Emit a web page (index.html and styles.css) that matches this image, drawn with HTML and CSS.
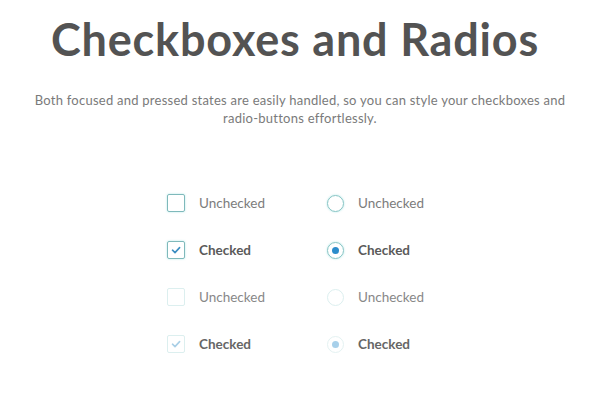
FILE: index.html
```html
<!DOCTYPE html>
<html>
<head>
<meta charset="utf-8">
<link rel="stylesheet" href="styles.css">
</head>
<body>
<div class="page">
  <h1 class="title">Checkboxes and Radios</h1>
  <p class="lead">Both focused and pressed states are easily handled, so you can style your checkboxes and<br>radio-buttons effortlessly.</p>
  <div class="grid">
    <div class="item"><span class="box"></span><span class="label">Unchecked</span></div>
    <div class="item"><span class="radio"></span><span class="label">Unchecked</span></div>
    <div class="item"><span class="box on"><svg viewBox="0 0 18 18" width="18" height="18"><path d="M5.5 9.2 L8 11.6 L12.6 6.6" fill="none" stroke="#3b8ec2" stroke-width="1.6" stroke-linecap="round" stroke-linejoin="round"/></svg></span><span class="label strong">Checked</span></div>
    <div class="item"><span class="radio on"><span class="dot"></span></span><span class="label strong">Checked</span></div>
    <div class="item dis"><span class="box"></span><span class="label">Unchecked</span></div>
    <div class="item dis"><span class="radio"></span><span class="label">Unchecked</span></div>
    <div class="item dis"><span class="box on"><svg viewBox="0 0 18 18" width="18" height="18"><path d="M5.5 9.2 L8 11.6 L12.6 6.6" fill="none" stroke="#a9cfe6" stroke-width="1.6" stroke-linecap="round" stroke-linejoin="round"/></svg></span><span class="label strong">Checked</span></div>
    <div class="item dis"><span class="radio on"><span class="dot"></span></span><span class="label strong">Checked</span></div>
  </div>
</div>
</body>
</html>
```
FILE: styles.css
```css
html, body { margin: 0; padding: 0; background: #fff; }
body { font-family: Lato, "Open Sans", sans-serif; }
.page { width: 600px; height: 400px; }
.title {
  margin: 0;
  padding: 12px 10px 0 0;
  text-align: center;
  font-size: 45px;
  font-weight: 700;
  color: #535353;
  line-height: 54px;
  letter-spacing: 0.8px;
}
.lead {
  margin: 25px 0 0;
  text-align: center;
  font-size: 13px;
  line-height: 18px;
  letter-spacing: 0.25px;
  color: #7a7a7a;
}
.grid {
  margin: 67px 0 0 167px;
  display: grid;
  grid-template-columns: 160px 120px;
  row-gap: 29px;
}
.item { display: flex; align-items: center; height: 18px; }
.box {
  width: 16px; height: 16px;
  border: 1.5px solid #7fb9bb;
  border-radius: 2px;
  box-shadow: 0 0 2px rgba(110, 210, 210, 0.6);
  flex: none;
  position: relative;
}
.box svg { position: absolute; left: -1.5px; top: -1.5px; }
.radio {
  width: 15px; height: 15px;
  border: 1.5px solid #86c4c4;
  border-radius: 50%;
  box-shadow: 0 0 2px rgba(110, 210, 210, 0.6);
  flex: none;
  display: flex; align-items: center; justify-content: center;
}
.dot { width: 7px; height: 7px; border-radius: 50%; background: #2b8ccb; }
.label {
  margin-left: 14px;
  font-size: 13.5px;
  color: #7c7c7c;
}
.strong { color: #5a5a5a; font-weight: 700; }
.dis .box, .dis .radio { border-color: #dcefef; box-shadow: none; }
.dis .dot { background: #a8d0ea; }
.dis .radio.on { border-color: #e4f2f2; }
.dis .label { color: #888; }
.dis .strong { color: #666; }
```
